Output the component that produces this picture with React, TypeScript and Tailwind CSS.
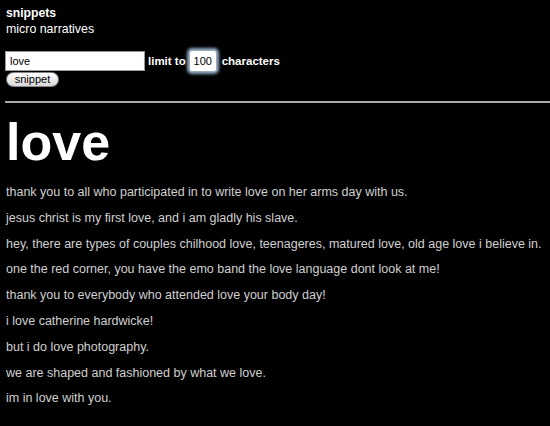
const snippets = [
  'thank you to all who participated in to write love on her arms day with us.',
  'jesus christ is my first love, and i am gladly his slave.',
  'hey, there are types of couples chilhood love, teenageres, matured love, old age love i believe in.',
  'one the red corner, you have the emo band the love language dont look at me!',
  'thank you to everybody who attended love your body day!',
  'i love catherine hardwicke!',
  'but i do love photography.',
  'we are shaped and fashioned by what we love.',
  'im in love with you.',
];

export default function App() {
  return (
    <div className="h-[426px] w-[550px] overflow-hidden bg-black font-['Liberation_Sans',Arial,sans-serif] text-white">
      <div className="px-[6px] pt-[5px]">
        <div className="text-[12.2px] font-bold leading-[16px]">snippets</div>
        <div className="text-[12.4px] leading-[16px]">micro narratives</div>

        <form className="mt-[14px]" onSubmit={(e) => e.preventDefault()}>
          <div className="flex h-[20px] items-center text-[11.5px] font-bold leading-[20px]">
            <input
              defaultValue="love"
              className="ml-[-1px] h-[20px] w-[140px] border border-[#999] bg-white px-[4px] text-[11px] font-normal text-black outline-none"
            />
            <span className="ml-[3px]">limit to</span>
            <input
              defaultValue="100"
              className="ml-[3px] h-[22px] w-[28px] shrink-0 rounded-[3px] border border-[#9ab] bg-white text-center text-[11px] font-normal text-black shadow-[0_0_3px_2px_#8fa6c0] outline-none"
            />
            <span className="ml-[5px]">characters</span>
          </div>
          <button
            type="submit"
            className="mt-[1px] block h-[15px] w-[53px] rounded-full border border-[#888] bg-gradient-to-b from-white to-[#d8d8d8] text-[11px] leading-[13px] text-black"
          >
            snippet
          </button>
        </form>
      </div>

      <hr className="ml-[5px] mt-[14px] border-0 border-t-2 border-[#aaa]" />

      <div className="px-[6px]">
        <h1 className="mt-[11px] text-[52px] font-bold leading-[56px]">love</h1>
        <div className="mt-[15px] flex flex-col gap-[10px]">
          {snippets.map((s) => (
            <p key={s} className="text-[12.5px] leading-[15.8px] text-[#d0d0d0]">
              {s}
            </p>
          ))}
        </div>
      </div>
    </div>
  );
}
